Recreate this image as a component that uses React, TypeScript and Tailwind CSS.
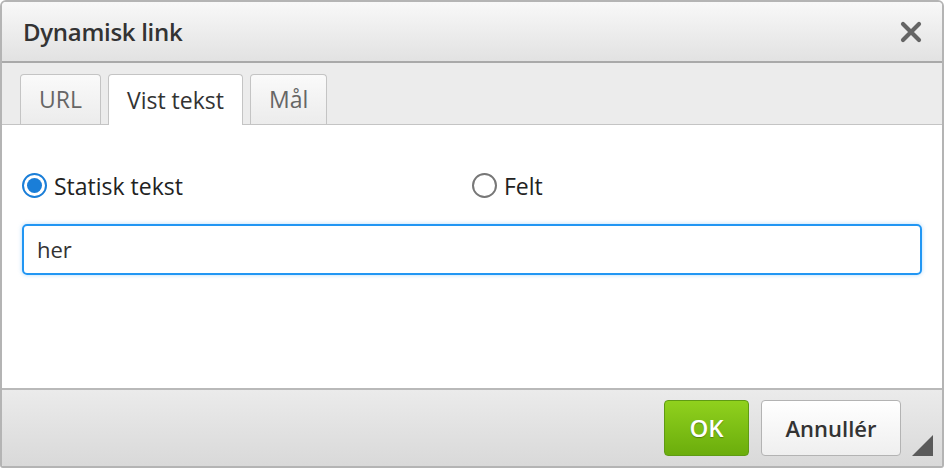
import React from 'react';

const tabs = ['URL', 'Vist tekst', 'Mål'];

const App = () => {
  const active = 1;

  return (
    <div className="w-[944px] h-[468px] bg-white" style={{ fontFamily: '"Open Sans", Lato, sans-serif' }}>
      <div className="w-full h-full flex flex-col border-2 border-[#b4b4b4] rounded-t-[6px] rounded-b-[3px] overflow-hidden">
        {/* header */}
        <div className="h-[61px] shrink-0 flex items-center justify-between pl-[21px] pr-[20px] bg-gradient-to-b from-[#f8f8f8] to-[#e2e2e2] border-b-2 border-[#a9a9a9]">
          <span className="text-[24px] font-semibold text-[#333] tracking-[-0.3px]">Dynamisk link</span>
          <svg width="22" height="22" viewBox="0 0 22 22">
            <path d="M3 3 L19 19 M19 3 L3 19" stroke="#656565" strokeWidth="4.2" strokeLinecap="round" />
          </svg>
        </div>

        {/* tabs */}
        <div className="h-[62px] shrink-0 flex items-end gap-[7px] pl-[18px] bg-[#ececec] border-b border-[#c4c4c4]">
          {tabs.map((t, i) => (
            <div
              key={t}
              className={
                i === active
                  ? 'h-[51px] -mb-px px-[18px] flex items-center rounded-t-[4px] border border-b-0 border-[#c4c4c4] bg-white text-[23px] text-[#333]'
                  : 'h-[50px] px-[18px] flex items-center rounded-t-[4px] border border-b-0 border-[#c4c4c4] bg-gradient-to-b from-[#fafafa] to-[#ececec] text-[23px] text-[#666]'
              }
            >
              {t}
            </div>
          ))}
        </div>

        {/* body */}
        <div className="flex-1 bg-white px-[20px] pt-[45px]">
          <div className="flex items-center h-[30px]">
            <label className="w-[450px] flex items-center gap-[7px]">
              <span className="w-[25px] h-[25px] rounded-full border-2 border-[#1a7ed8] flex items-center justify-center">
                <span className="w-[15px] h-[15px] rounded-full bg-[#1a7ed8]" />
              </span>
              <span className="text-[23px] text-[#222] mt-[3px]">Statisk tekst</span>
            </label>
            <label className="flex items-center gap-[7px]">
              <span className="w-[25px] h-[25px] rounded-full border-2 border-[#777]" />
              <span className="text-[23px] text-[#222] mt-[3px]">Felt</span>
            </label>
          </div>
          <div className="mt-[24px] h-[51px] w-[900px] rounded-[5px] border-2 border-[#2196f3] shadow-[0_0_4px_rgba(33,150,243,0.35)] flex items-center px-[13px]">
            <span className="text-[22px] text-[#333]">her</span>
          </div>
        </div>

        {/* footer */}
        <div className="h-[78px] shrink-0 border-t-2 border-[#b9b9b9] bg-gradient-to-b from-[#ebebeb] to-[#d9d9d9] flex items-start justify-end pt-[10px] pr-[9px] relative">
          <div className="flex gap-[12px]">
            <button className="w-[85px] h-[56px] rounded-[4px] border border-[#5f9b14] bg-gradient-to-b from-[#90d11d] to-[#6bad0c] text-white text-[24px] font-semibold [text-shadow:0_1px_1px_rgba(0,0,0,0.3)]">
              OK
            </button>
            <button className="w-[140px] h-[56px] rounded-[4px] border border-[#b3b3b3] bg-gradient-to-b from-white to-[#efefef] text-[#333] text-[22px] font-semibold">
              Annullér
            </button>
          </div>
          <div className="w-[32px]" />
          <svg className="absolute right-[9px] bottom-[10px]" width="21" height="21" viewBox="0 0 21 21">
            <path d="M21 0 L21 21 L0 21 Z" fill="#5a5a5a" />
          </svg>
        </div>
      </div>
    </div>
  );
};

export default App;
